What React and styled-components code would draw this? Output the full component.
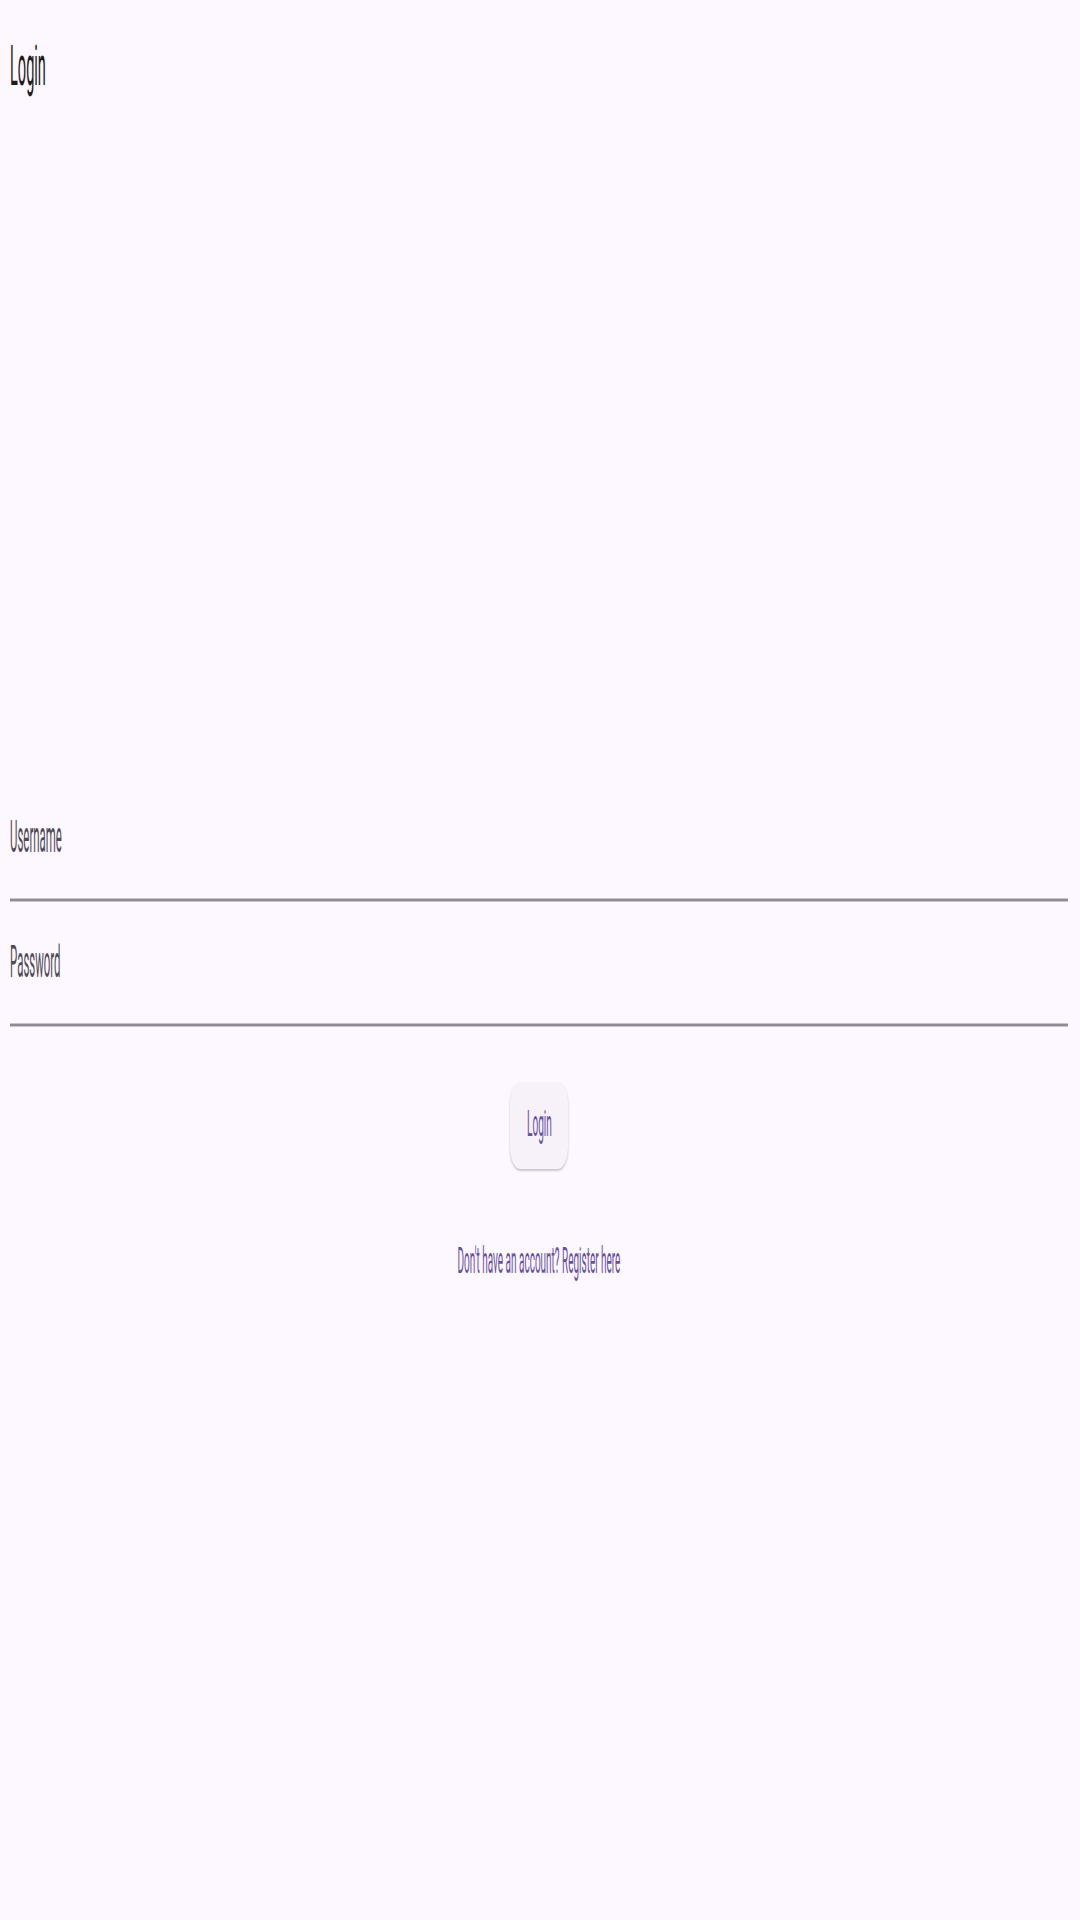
import React from "react";
import styled, { createGlobalStyle } from "styled-components";

const GlobalStyle = createGlobalStyle`
  html, body {
    margin: 0;
    padding: 0;
    background: #fdf7ff;
  }
  body {
    font-family: Roboto, "Noto Sans", sans-serif;
    min-height: 1920px;
  }
`;

// the whole screen draws its text squeezed to about a quarter of its width
const SQUEEZE = 0.26;

const Page = styled.div`
  display: flex;
  flex-direction: column;
  min-height: 1920px;
  padding: 0 12px 0 10px;
  box-sizing: border-box;
  background: #fdf7ff;
`;

const Squeezed = styled.span`
  display: inline-block;
  white-space: nowrap;
  line-height: 1;
  font-size: ${(props) => props.size}px;
  color: ${(props) => props.color};
  transform: scaleX(${(props) => props.squeeze || SQUEEZE});
  transform-origin: ${(props) => (props.center ? "center" : "left")} center;
`;

const Header = styled.header`
  padding-top: 38px;
  height: 56px;
`;

const Form = styled.form`
  display: flex;
  flex-direction: column;
  margin-top: 721px;
`;

const Field = styled.label`
  display: flex;
  flex-direction: column;
  padding-bottom: 40px;
  border-bottom: 2px solid #8f8a94;
  box-shadow: 0 1px 0 #c9c4cd, inset 0 -1px 0 #c9c4cd;
  margin-bottom: ${(props) => props.gap}px;
`;

const Actions = styled.div`
  display: flex;
  flex-direction: column;
  align-items: center;
  margin-top: 56px;
`;

const LoginButton = styled.button`
  display: flex;
  justify-content: center;
  align-items: center;
  width: 58px;
  height: 87px;
  padding: 0 0 4px;
  border: none;
  border-radius: 10px / 22px;
  background: #f7f1fa;
  box-shadow: 0 2px 2px rgba(0, 0, 0, 0.16), 0 1px 3px rgba(0, 0, 0, 0.07);
  font-family: inherit;
  overflow: visible;
`;

const RegisterRow = styled.div`
  display: flex;
  justify-content: center;
  margin-top: 74px;
`;

const RegisterLink = styled.a`
  display: flex;
  justify-content: center;
  width: 170px;
  text-decoration: none;
`;

const App = () => {
  return (
    <>
      <GlobalStyle />
      <Page>
        <Header>
          <Squeezed size={56} color="#1d1b20">
            Login
          </Squeezed>
        </Header>
        <Form onSubmit={(e) => e.preventDefault()}>
          <Field gap={39}>
            <Squeezed size={44} color="#4f4b55">
              Username
            </Squeezed>
          </Field>
          <Field gap={0}>
            <Squeezed size={44} color="#4f4b55">
              Password
            </Squeezed>
          </Field>
          <Actions>
            <LoginButton type="submit">
              <Squeezed size={36} color="#6750a4" squeeze={0.28} center>
                Login
              </Squeezed>
            </LoginButton>
          </Actions>
          <RegisterRow>
            <RegisterLink href="#register">
              <Squeezed size={36} color="#6750a4" squeeze={0.277} center>
                Don't have an account? Register here
              </Squeezed>
            </RegisterLink>
          </RegisterRow>
        </Form>
      </Page>
    </>
  );
};

export default App;
